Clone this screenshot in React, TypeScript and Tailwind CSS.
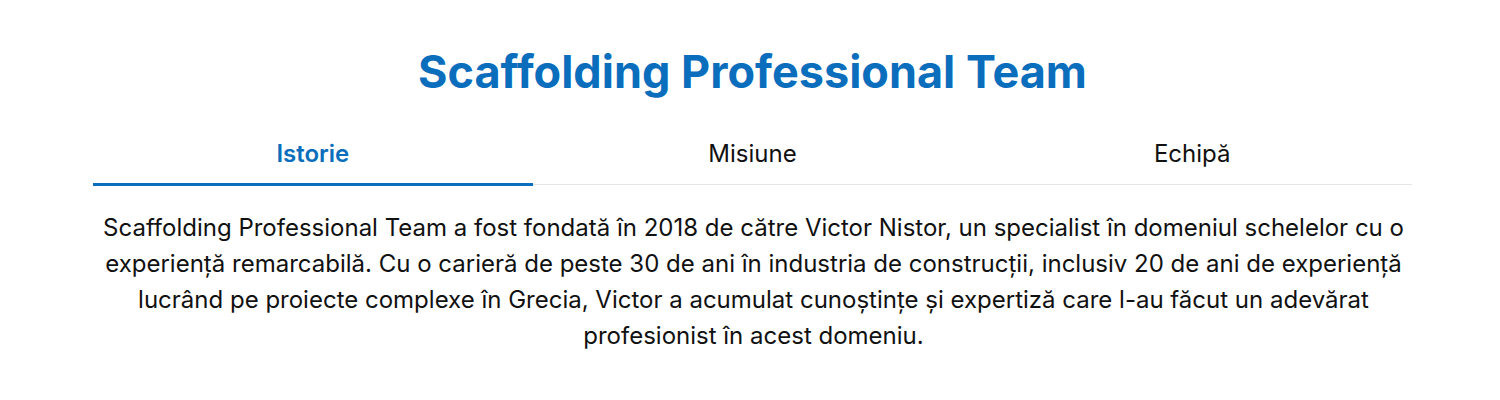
import React from "react";

export default function App() {
  const tabs = ["Istorie", "Misiune", "Echipă"];
  return (
    <div className="w-[1500px] h-[400px] bg-white" style={{ fontFamily: "Inter, 'Noto Sans', sans-serif" }}>
      <div className="ml-[93px] w-[1319px] pt-[44px]">
        <h1 className="text-center text-[45px] leading-[56px] font-bold text-[#0a6ebd]">
          Scaffolding Professional Team
        </h1>
        <div className="mt-[38px] flex items-start border-b border-[#e5e5e5]">
          {tabs.map((t, i) => (
            <div
              key={t}
              className={
                i === 0
                  ? "flex-1 text-center text-[24px] leading-[32px] pb-[13px] font-semibold text-[#0a6ebd] border-b-[3px] border-[#0a6ebd] -mb-[2px]"
                  : "flex-1 text-center text-[24px] leading-[32px] pb-[14px] text-[#111]"
              }
            >
              {t}
            </div>
          ))}
        </div>
        <p className="mt-[25px] text-center text-[24px] leading-[36px] text-[#111] px-[4px] translate-x-[1px]">
          Scaffolding Professional Team a fost fondată în 2018 de către Victor Nistor, un specialist în domeniul schelelor cu o
          experiență remarcabilă. Cu o carieră de peste 30 de ani în industria de construcții, inclusiv 20 de ani de experiență
          lucrând pe proiecte complexe în Grecia, Victor a acumulat cunoștințe și expertiză care l-au făcut un adevărat
          profesionist în acest domeniu.
        </p>
      </div>
    </div>
  );
}
